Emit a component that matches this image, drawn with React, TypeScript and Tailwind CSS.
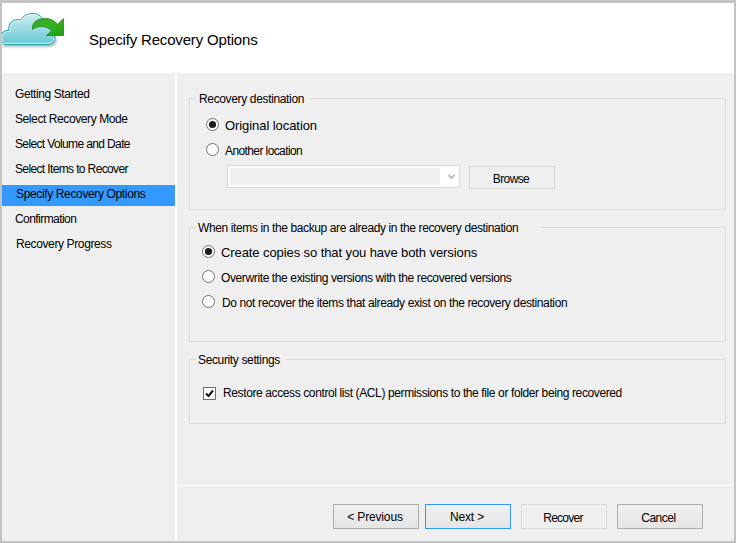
import type { ReactNode } from "react";

const steps = [
  { label: "Getting Started", style: "pl-[13px] tracking-[-0.41px]" },
  { label: "Select Recovery Mode", style: "pl-[13px] tracking-[-0.41px]" },
  { label: "Select Volume and Date", style: "pl-[13px] tracking-[-0.63px]" },
  { label: "Select Items to Recover", style: "pl-[13px] tracking-[-0.63px]" },
  { label: "Specify Recovery Options", style: "pl-[14px] tracking-[-0.36px] bg-[#3399ff]" },
  { label: "Confirmation", style: "pl-[13px] tracking-[-0.56px]" },
  { label: "Recovery Progress", style: "pl-[14px] tracking-[-0.38px]" },
];

function CloudLogo() {
  return (
    <svg width="66" height="42" viewBox="2 9 66 42" className="block shrink-0">
      <defs>
        <linearGradient id="cloud" x1="0" y1="0" x2="0" y2="1">
          <stop offset="0" stopColor="#d3eef2" />
          <stop offset="0.5" stopColor="#9bdbe2" />
          <stop offset="1" stopColor="#62c7d2" />
        </linearGradient>
        <linearGradient id="arrow" x1="0" y1="0" x2="1" y2="1">
          <stop offset="0" stopColor="#3f9a32" />
          <stop offset="0.45" stopColor="#35b51f" />
          <stop offset="1" stopColor="#229c12" />
        </linearGradient>
        <filter id="soft" x="-10%" y="-50%" width="120%" height="200%">
          <feGaussianBlur stdDeviation="0.8" />
        </filter>
      </defs>
      <path d="M3 45.5H51Q55 44 56 39" fill="none" stroke="#8b9698" strokeWidth="1.8" filter="url(#soft)" />
      <path
        d="M5 44.5C1 43 0 38 1.500 34C3 31 6 30 8.800 30.500C7.800 23 13 18 20.500 20C23.500 15.500 28 13.200 33 13.500C38 13.500 41 16 43 19.500C49 20 51 25 50 29.500C54 31 55.500 34.500 55 38C54.500 42 52 44.500 48 44.500Z"
        fill="url(#cloud)"
        stroke="#25a3b3"
        strokeWidth="1"
      />
      <path
        d="M5 43.300C2 42 1.500 38 2.500 35C4 32 7 31.300 10 31.700C9 24 14 19.500 21 21.200C23.500 16.500 28 14.500 33 14.700C37 14.700 40 17 42 20.500M5 43.300H48C51.500 43.300 53.500 41 53.800 38"
        fill="none"
        stroke="#d8f4f6"
        strokeWidth="0.9"
      />
      <path
        d="M32.500 29.500C31.500 23 37 18.500 44.500 18.500C50.500 18.500 54.500 20.500 57.500 24.300L63.500 18.700V35.500H46.500L52 30.500C46.500 25.500 37 25.500 32.500 29.500Z"
        fill="url(#arrow)"
        stroke="#168c16"
        strokeWidth="0.8"
      />
    </svg>
  );
}

function Group({ title, legend, className, children }: { title: string; legend: string; className: string; children: ReactNode }) {
  return (
    <fieldset className={`w-[537px] border border-[#dcdcdc] ${className}`}>
      <legend className={`ml-[6px] h-[15px] whitespace-nowrap leading-[17px] ${legend}`}>{title}</legend>
      {children}
    </fieldset>
  );
}

function Radio({ label, checked = false, text }: { label: string; checked?: boolean; text: string }) {
  return (
    <label className="flex h-[25px] items-center whitespace-nowrap">
      <svg width="13" height="13" className="block shrink-0">
        <circle cx="6.5" cy="6.5" r="6" fill="#fff" stroke="#707070" />
        {checked && <circle cx="6.5" cy="6.5" r="3.600" fill="#1c1c1c" />}
      </svg>
      <span className={`leading-[23px] ${text}`}>{label}</span>
    </label>
  );
}

function Button({ label, className }: { label: string; className: string }) {
  return (
    <button className={`flex w-[86px] shrink-0 justify-center whitespace-nowrap border ${className}`}>
      {label}
    </button>
  );
}

export default function App() {
  return (
    <div className="flex h-[543px] w-[736px] flex-col overflow-hidden border-2 border-t-[3px] border-[#c3c3c3] bg-[#efefef] font-['Liberation_Sans',Arial,sans-serif] text-[12px] text-black">
      <header className="flex h-[70px] shrink-0 bg-white pt-[6px]">
        <CloudLogo />
        <h1 className="ml-[21px] mt-[22px] whitespace-nowrap text-[15px] leading-[18px] tracking-[-0.17px]">
          Specify Recovery Options
        </h1>
      </header>
      <div className="flex min-h-0 flex-1">
        <nav className="flex w-[175px] shrink-0 flex-col gap-1 border-r-2 border-white pt-[12px]">
          {steps.map((s) => (
            <div key={s.label} className={`h-[21px] whitespace-nowrap leading-[19px] ${s.style}`}>
              {s.label}
            </div>
          ))}
        </nav>
        <div className="flex flex-1 flex-col">
          <main className="flex h-[412px] flex-col pl-[12px] pt-[18px]">
            <Group title="Recovery destination" className="h-[119px]" legend="w-[114px] pl-[3px] tracking-[-0.35px]">
              <div className="pl-[16px] pt-[6px]">
                <Radio label="Original location" checked text="pl-[6px] pt-0.5 text-[13px] tracking-[-0.07px]" />
                <Radio label="Another location" text="pl-[6px] pt-1 tracking-[-0.6px]" />
              </div>
              <div className="flex pl-[37px] pt-[3px]">
                <div className="flex h-[23px] w-[233px] justify-between border border-[#d9d9d9] bg-white py-[2px] pl-[2px] pr-[4px]">
                  <div className="h-[17px] w-[210px] bg-[#efefef]" />
                  <svg width="7" height="7" viewBox="0 0 7 7" className="mt-[6px]">
                    <path d="M0.500 1L3.500 4L6.500 1" fill="none" stroke="#bcbcbc" strokeWidth="2" />
                  </svg>
                </div>
                <Button label="Browse" className="ml-[9px] mt-px h-[23px] border-[#d9d9d9] pr-[2px] leading-[24px] tracking-[-0.6px]" />
              </div>
            </Group>
            <Group
              title="When items in the backup are already in the recovery destination"
              className="mt-[10px] h-[122px]"
              legend="w-[345px] pl-[2px] tracking-[-0.385px]"
            >
              <div className="pl-[12px] pt-[4px]">
                <Radio label="Create copies so that you have both versions" checked text="pl-[6px] pt-0.5 text-[13px] tracking-[-0.09px]" />
                <Radio label="Overwrite the existing versions with the recovered versions" text="pl-[6px] pt-1 tracking-[-0.38px]" />
                <Radio label="Do not recover the items that already exist on the recovery destination" text="pl-[7px] pt-1 tracking-[-0.38px]" />
              </div>
            </Group>
            <Group title="Security settings" className="mt-[10px] h-[72px]" legend="w-[90px] pl-[2px] tracking-[-0.36px]">
              <label className="flex items-center whitespace-nowrap pl-[13px] pt-[14px]">
                <svg width="13" height="13" className="block shrink-0">
                  <rect x="0.5" y="0.5" width="12" height="12" fill="#fff" stroke="#707070" />
                  <path d="M3 6.500L5.500 9L10 3.500" fill="none" stroke="#111" strokeWidth="2" />
                </svg>
                <span className="pl-[7px] leading-[25px] tracking-[-0.385px]">
                  Restore access control list (ACL) permissions to the file or folder being recovered
                </span>
              </label>
            </Group>
          </main>
          <footer className="flex flex-1 border-t border-white pl-[156px] pt-[18px]">
            <Button label="< Previous" className="h-[25px] border-[#adadad] bg-linear-to-b from-[#f0f0f0] to-[#e5e5e5] pr-[2px] leading-[25px] tracking-[-0.15px]" />
            <Button label="Next >" className="ml-[6px] h-[25px] border-[#3399ff] bg-linear-to-b from-[#f0f0f0] to-[#e5e5e5] pr-[2px] leading-[25px] tracking-[-0.17px]" />
            <Button label="Recover" className="ml-[10px] h-[25px] border-[#d9d9d9] pr-[2px] leading-[27px] tracking-[-0.75px]" />
            <Button label="Cancel" className="ml-[10px] h-[25px] border-[#adadad] bg-linear-to-b from-[#f0f0f0] to-[#e5e5e5] pr-[3px] leading-[27px] tracking-[-0.47px]" />
          </footer>
        </div>
      </div>
    </div>
  );
}
